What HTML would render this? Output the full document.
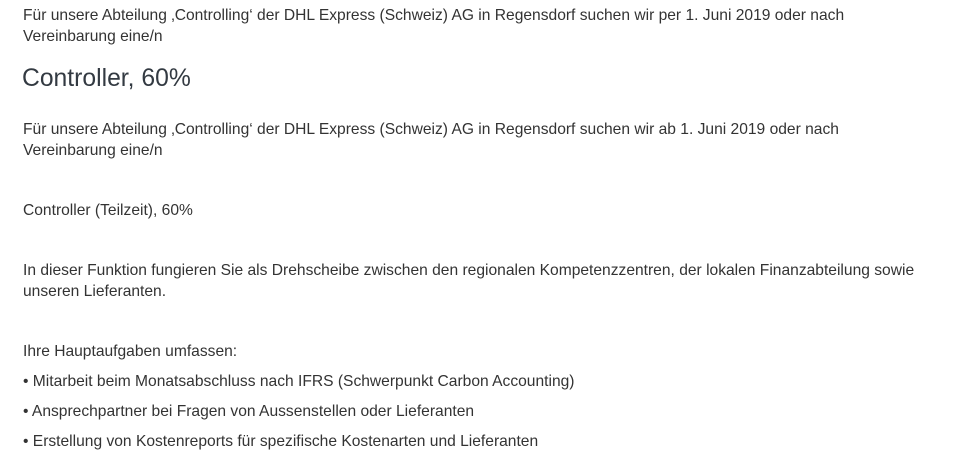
<!DOCTYPE html>
<html><head><meta charset="utf-8"><style>
body{margin:0;background:#fff;width:971px;height:458px;overflow:hidden;font-family:"Liberation Sans",sans-serif;color:#333;}
.l{position:absolute;left:23px;font-size:15.6px;line-height:20px;white-space:nowrap;}
.h{position:absolute;left:22px;font-size:24.7px;line-height:30px;color:#333a42;}
</style></head><body>
<div class="l" style="top:6px">Für unsere Abteilung ‚Controlling‘ der DHL Express (Schweiz) AG in Regensdorf suchen wir per 1. Juni 2019 oder nach</div>
<div class="l" style="top:27px">Vereinbarung eine/n</div>
<div class="h" style="top:64px">Controller, 60%</div>
<div class="l" style="top:120px">Für unsere Abteilung ‚Controlling‘ der DHL Express (Schweiz) AG in Regensdorf suchen wir ab 1. Juni 2019 oder nach</div>
<div class="l" style="top:141px">Vereinbarung eine/n</div>
<div class="l" style="top:201px">Controller (Teilzeit), 60%</div>
<div class="l" style="top:261px">In dieser Funktion fungieren Sie als Drehscheibe zwischen den regionalen Kompetenzzentren, der lokalen Finanzabteilung sowie</div>
<div class="l" style="top:282px">unseren Lieferanten.</div>
<div class="l" style="top:342px">Ihre Hauptaufgaben umfassen:</div>
<div class="l" style="top:372px">• Mitarbeit beim Monatsabschluss nach IFRS (Schwerpunkt Carbon Accounting)</div>
<div class="l" style="top:402px">• Ansprechpartner bei Fragen von Aussenstellen oder Lieferanten</div>
<div class="l" style="top:432px">• Erstellung von Kostenreports für spezifische Kostenarten und Lieferanten</div>
</body></html>
